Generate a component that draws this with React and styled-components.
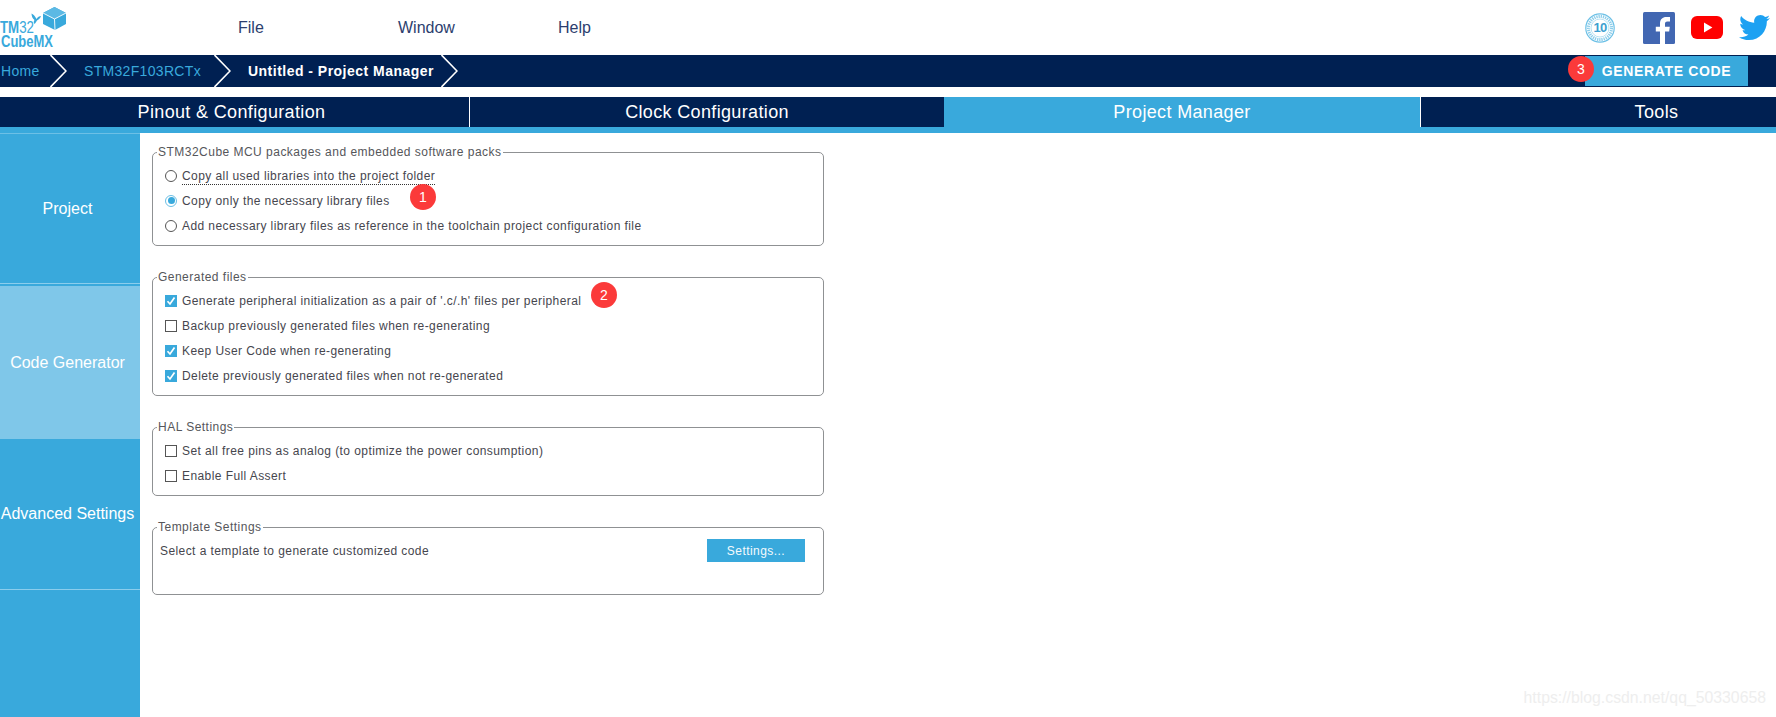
import React from "react";
import styled, { createGlobalStyle } from "styled-components";
import { FaTwitter } from "react-icons/fa";

const NAVY = "#002052";
const BLUE = "#39a9dc";

const GlobalStyle = createGlobalStyle`
  html, body { margin: 0; padding: 0; background: #fff; }
  body { font-family: "Liberation Sans", Arial, sans-serif; }
`;

const Page = styled.div`
  position: relative;
  width: 1776px;
  height: 717px;
  overflow: hidden;
  display: flex;
  flex-direction: column;
`;

// Top header

const Header = styled.header`
  height: 55px;
  display: flex;
  align-items: center;
`;

const LogoBox = styled.div`
  width: 238px;
  height: 55px;
  flex: none;
`;

const NavItem = styled.div`
  width: 160px;
  font-size: 16px;
  color: #2c3e6e;
`;

const Socials = styled.div`
  margin-left: auto;
  margin-right: 6px;
  display: flex;
  align-items: center;
  gap: 16px;
`;

const SealIcon = styled.svg`
  margin-right: 12px;
`;

// Breadcrumb bar

const CrumbBar = styled.div`
  height: 32px;
  background: ${NAVY};
  display: flex;
  align-items: center;
`;

const Crumb = styled.div`
  width: ${(p) => p.$width}px;
  padding-left: ${(p) => p.$pad}px;
  box-sizing: border-box;
  font-size: 14px;
  font-weight: ${(p) => (p.$active ? 700 : 400)};
  letter-spacing: ${(p) => (p.$active ? "0.48px" : "0.32px")};
  color: ${(p) => (p.$active ? "#fff" : BLUE)};
  white-space: nowrap;
`;

const ChevronIcon = styled.svg`
  flex: none;
  display: block;
`;

const GenerateButton = styled.div`
  position: relative;
  margin-left: auto;
  margin-right: 28px;
  width: 163px;
  height: 30px;
  background: ${BLUE};
  color: #fff;
  font-size: 14px;
  font-weight: 700;
  letter-spacing: 0.65px;
  display: flex;
  align-items: center;
  justify-content: center;
`;

const Marker = styled.div`
  position: absolute;
  left: ${(p) => p.$left}px;
  top: ${(p) => p.$top}px;
  width: 26px;
  height: 26px;
  border-radius: 50%;
  background: #fb3a3a;
  color: #fff;
  font-size: 14px;
  font-weight: 400;
  letter-spacing: 0;
  display: flex;
  align-items: center;
  justify-content: center;
`;

// Tabs

const TabBar = styled.nav`
  margin-top: 10px;
  display: grid;
  grid-template-columns: 469px 475px 476px 1fr;
  border-bottom: 6px solid ${BLUE};
`;

const Tab = styled.div`
  height: 30px;
  box-sizing: border-box;
  padding-left: ${(p) => p.$shiftLeft || 0}px;
  padding-right: ${(p) => p.$shiftRight || 0}px;
  background: ${(p) => (p.$active ? BLUE : NAVY)};
  border-left: ${(p) => (p.$divider ? "1px solid #fff" : "none")};
  color: #fff;
  font-size: 18px;
  letter-spacing: 0.35px;
  display: flex;
  align-items: center;
  justify-content: center;
`;

// Body

const Body = styled.div`
  flex: 1;
  display: flex;
  min-height: 0;
`;

const Sidebar = styled.aside`
  width: 140px;
  flex: none;
  background: ${BLUE};
  display: flex;
  flex-direction: column;
  border-top: 1px solid #6cc0e6;
`;

const SideItem = styled.div`
  height: ${(p) => p.$height}px;
  box-sizing: border-box;
  padding-right: 5px;
  margin-bottom: ${(p) => p.$gap || 0}px;
  background: ${(p) => (p.$active ? "#7fc7e9" : BLUE)};
  border-bottom: ${(p) => (p.$line ? "1px solid #8bcdec" : "none")};
  color: #fff;
  font-size: 16px;
  white-space: nowrap;
  display: flex;
  align-items: center;
  justify-content: center;
`;

const Main = styled.main`
  padding: 12px 0 0 12px;
  display: flex;
  flex-direction: column;
  gap: 24px;
`;

const Panel = styled.fieldset`
  width: 672px;
  min-width: 0;
  height: ${(p) => (p.$height ? `${p.$height}px` : "auto")};
  margin: 0;
  padding: 4px 12px 7px;
  box-sizing: border-box;
  border: 1px solid #8f9193;
  border-radius: 5px;
`;

const PanelTitle = styled.legend`
  margin-left: -8px;
  padding: 0 1px;
  font-size: 12px;
  line-height: 14px;
  letter-spacing: 0.48px;
  color: #55565a;
`;

const Row = styled.div`
  position: relative;
  height: 25px;
  display: flex;
  align-items: center;
  gap: 5px;
`;

const Label = styled.span`
  position: relative;
  font-size: 12px;
  letter-spacing: 0.42px;
  color: #46464e;
  white-space: nowrap;

  ${(p) =>
    p.$dotted &&
    `&::after {
      content: "";
      position: absolute;
      left: 0;
      right: 0;
      bottom: -2px;
      border-bottom: 1px dotted #333;
    }`}
`;

const RadioDot = styled.span`
  width: 12px;
  height: 12px;
  flex: none;
  box-sizing: border-box;
  border-radius: 50%;
  background: #fff;
  border: 1px solid ${(p) => (p.$on ? "#6bbfe5" : "#555")};
  display: flex;
  align-items: center;
  justify-content: center;

  &::before {
    content: "";
    width: 7px;
    height: 7px;
    border-radius: 50%;
    background: ${(p) => (p.$on ? BLUE : "transparent")};
  }
`;

const CheckBox = styled.span`
  width: 12px;
  height: 12px;
  flex: none;
  box-sizing: border-box;
  background: ${(p) => (p.$on ? BLUE : "#fff")};
  border: 1px solid ${(p) => (p.$on ? BLUE : "#555")};
  display: flex;
  align-items: center;
  justify-content: center;
`;

const TemplateRow = styled.div`
  height: 23px;
  margin-top: 1px;
  margin-left: -5px;
  margin-right: 6px;
  display: flex;
  align-items: center;
  justify-content: space-between;
`;

const SettingsButton = styled.div`
  width: 98px;
  height: 23px;
  background: ${BLUE};
  color: #f4fafd;
  font-size: 12px;
  letter-spacing: 0.45px;
  display: flex;
  align-items: center;
  justify-content: center;
`;

const Watermark = styled.div`
  position: absolute;
  right: 10px;
  bottom: 10px;
  font-size: 15.8px;
  color: #eeeeee;
`;

// Small drawings

const Logo = () => (
  <svg width="70" height="55" viewBox="0 0 70 55">
    <path d="M54.5 7 L66 13 L66 24 L55 30 L43 24 L43 13 Z" fill={BLUE} />
    <path d="M54.5 7 L66 13 L54.5 19 L43 13 Z" fill="#5cb9e4" />
    <path d="M43 13 L54.5 19 L66 13 M54.5 19 L55 30" fill="none" stroke="#fff" strokeWidth="0.9" />
    <path d="M36.5 19 C35 16 33 14 31.5 13.5 C31.5 16 32.5 18.5 34.5 20 C33.5 21 33.5 23 34.5 24 C35.5 23 36.5 21.5 37 20.5 C38.5 20 40.5 18 41 16 C39.5 16 37.5 17 36.5 19 Z" fill={BLUE} />
    <text x="0" y="33" fontSize="16.5" fill={BLUE} textLength="34" lengthAdjust="spacingAndGlyphs">
      <tspan fontWeight="700">TM</tspan>
      <tspan>32</tspan>
    </text>
    <text x="1" y="46.5" fontSize="16" fontWeight="700" fill={BLUE} textLength="52" lengthAdjust="spacingAndGlyphs">CubeMX</text>
  </svg>
);

const Seal = () => (
  <SealIcon width="30" height="30" viewBox="0 0 30 30">
    <circle cx="15" cy="15" r="14.2" fill="#fff" stroke="#6cc0e6" strokeWidth="1.2" />
    <circle cx="15" cy="15" r="11.6" fill="none" stroke="#8ccdea" strokeWidth="3" strokeDasharray="1.3 0.9" />
    <circle cx="15" cy="15" r="9" fill="#fff" stroke="#8ccdea" strokeWidth="0.6" />
    <text x="15" y="18.5" textAnchor="middle" fontSize="13" fontWeight="700" letterSpacing="-0.8" fill="#3d9fd0">10</text>
  </SealIcon>
);

const Facebook = () => (
  <svg width="32" height="32" viewBox="0 0 32 32">
    <rect width="32" height="32" rx="1.5" fill="#4267b2" />
    <path d="M22 32 V19.6 H26.2 L26.8 14.8 H22 V11.8 C22 10.4 22.4 9.4 24.4 9.4 H27 V5.1 C26.5 5 25 4.9 23.3 4.9 C19.6 4.9 17 7.2 17 11.3 V14.8 H12.8 V19.6 H17 V32 Z" fill="#fff" />
  </svg>
);

const Youtube = () => (
  <svg width="32" height="23" viewBox="0 0 32 23">
    <rect width="32" height="23" rx="6" fill="#ff0000" />
    <path d="M13 6.6 L21.4 11.5 L13 16.4 Z" fill="#fff" />
  </svg>
);

const Chevron = () => (
  <ChevronIcon width="17" height="32" viewBox="0 0 17 32">
    <path d="M0.5 0 L16 16 L0.5 32" fill="none" stroke="#fff" strokeWidth="1.6" />
  </ChevronIcon>
);

const Tick = () => (
  <svg width="10" height="10" viewBox="0 0 10 10">
    <path d="M1.5 5.2 L4 8 L8.5 1.5" fill="none" stroke="#fff" strokeWidth="1.7" />
  </svg>
);

const Radio = ({ on, dotted, children, marker }) => (
  <Row>
    <RadioDot $on={on} />
    <Label $dotted={dotted}>{children}</Label>
    {marker}
  </Row>
);

const Check = ({ on, children, marker }) => (
  <Row>
    <CheckBox $on={on}>{on && <Tick />}</CheckBox>
    <Label>{children}</Label>
    {marker}
  </Row>
);

export default function App() {
  return (
    <Page>
      <GlobalStyle />
      <Header>
        <LogoBox>
          <Logo />
        </LogoBox>
        <NavItem>File</NavItem>
        <NavItem>Window</NavItem>
        <NavItem>Help</NavItem>
        <Socials>
          <Seal />
          <Facebook />
          <Youtube />
          <FaTwitter size={31} color="#1da1f2" />
        </Socials>
      </Header>

      <CrumbBar>
        <Crumb $width={50} $pad={1}>Home</Crumb>
        <Chevron />
        <Crumb $width={147} $pad={17}>STM32F103RCTx</Crumb>
        <Chevron />
        <Crumb $width={210} $pad={17} $active>Untitled - Project Manager</Crumb>
        <Chevron />
        <GenerateButton>
          <Marker $left={-17} $top={0}>3</Marker>
          GENERATE CODE
        </GenerateButton>
      </CrumbBar>

      <TabBar>
        <Tab $shiftRight={6}>Pinout &amp; Configuration</Tab>
        <Tab $divider>Clock Configuration</Tab>
        <Tab $active>Project Manager</Tab>
        <Tab $divider $shiftLeft={116}>Tools</Tab>
      </TabBar>

      <Body>
        <Sidebar>
          <SideItem $height={150} $gap={2} $line>Project</SideItem>
          <SideItem $active $height={153}>Code Generator</SideItem>
          <SideItem $height={151} $line>Advanced Settings</SideItem>
        </Sidebar>

        <Main>
          <Panel>
            <PanelTitle>STM32Cube MCU packages and embedded software packs</PanelTitle>
            <Radio dotted>Copy all used libraries into the project folder</Radio>
            <Radio on marker={<Marker $left={245} $top={-4}>1</Marker>}>Copy only the necessary library files</Radio>
            <Radio>Add necessary library files as reference in the toolchain project configuration file</Radio>
          </Panel>

          <Panel>
            <PanelTitle>Generated files</PanelTitle>
            <Check on marker={<Marker $left={426} $top={-6}>2</Marker>}>
              Generate peripheral initialization as a pair of '.c/.h' files per peripheral
            </Check>
            <Check>Backup previously generated files when re-generating</Check>
            <Check on>Keep User Code when re-generating</Check>
            <Check on>Delete previously generated files when not re-generated</Check>
          </Panel>

          <Panel>
            <PanelTitle>HAL Settings</PanelTitle>
            <Check>Set all free pins as analog (to optimize the power consumption)</Check>
            <Check>Enable Full Assert</Check>
          </Panel>

          <Panel $height={75}>
            <PanelTitle>Template Settings</PanelTitle>
            <TemplateRow>
              <Label>Select a template to generate customized code</Label>
              <SettingsButton>Settings...</SettingsButton>
            </TemplateRow>
          </Panel>
        </Main>
      </Body>

      <Watermark>https://blog.csdn.net/qq_50330658</Watermark>
    </Page>
  );
}
